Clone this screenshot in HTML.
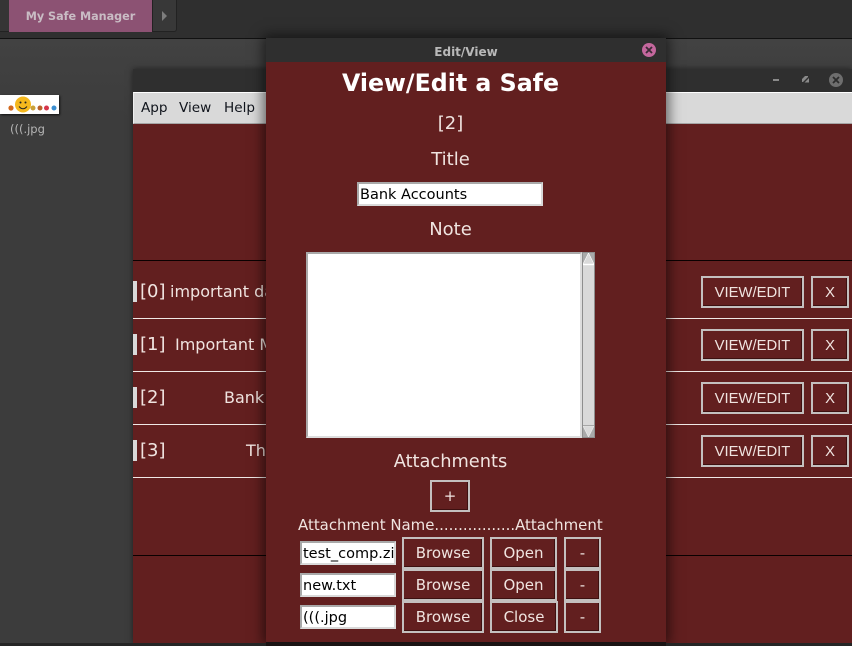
<!DOCTYPE html>
<html><head><meta charset="utf-8">
<style>
html,body{margin:0;padding:0;}
body{width:852px;height:646px;overflow:hidden;position:relative;background:#3c3c3c;font-family:"DejaVu Sans",sans-serif;}
div{position:absolute;box-sizing:border-box;white-space:nowrap;}
.t{color:#f0e4e0;line-height:20px;}
.b2{border:2px solid #c4c0bf;background:#621f1f;color:#f0e4e0;text-align:center;box-shadow:inset -1px -1px 0 #3d1010;}
.inp{background:#fff;border:2px solid #a9a9a9;border-right-color:#d9d9d9;border-bottom-color:#d9d9d9;color:#000;font-size:14.5px;overflow:hidden;padding-left:1px;padding-top:1px;}
.ln{left:133px;width:719px;height:1px;background:#f0e8e6;}
.va{font-family:"Liberation Sans",sans-serif;font-size:14.8px;line-height:30px;}
.ab{font-size:15px;line-height:29px;}
.idx{font-size:18px;left:140px;}
.row{font-size:16px;}
</style></head><body>
<!-- top bar -->
<div style="left:0;top:0;width:852px;height:38px;background:#2f2f2f;"></div>
<div style="left:0;top:38px;width:852px;height:1px;background:#111;"></div>
<div style="left:0;top:0;width:9px;height:32px;background:#353535;border-bottom:1px solid #222;"></div>
<div style="left:9px;top:0;width:143px;height:32px;background:#8c5273;color:#c9bcc4;font-size:11.2px;font-weight:bold;line-height:33px;text-align:center;">My Safe Manager</div>
<div style="left:152px;top:0;width:25px;height:32px;background:#383838;border-left:1px solid #222;border-right:1px solid #222;border-bottom:1px solid #222;border-radius:0 0 3px 0;"></div>
<svg style="position:absolute;left:162px;top:11px" width="6" height="10"><path d="M0 0L5 5L0 10Z" fill="#7d7d7d"/></svg>
<!-- desktop -->
<div style="left:0;top:39px;width:852px;height:607px;background:linear-gradient(#424242,#3c3c3c 80px);"></div>
<div style="left:0;top:95px;width:59px;height:19px;background:#fff;box-shadow:1px 1px 2px #111;"></div>
<svg style="position:absolute;left:7px;top:95px" width="52" height="20">
<circle cx="4" cy="13" r="2.6" fill="#d2691e"/>
<circle cx="16" cy="9.5" r="8" fill="#f5b81d"/><circle cx="13.5" cy="7.5" r="1" fill="#222"/><circle cx="18.5" cy="7.5" r="1" fill="#222"/><path d="M12 11.5Q16 16 20 11.5" stroke="#222" fill="none"/>
<circle cx="26" cy="13" r="2.5" fill="#c9a13a"/><circle cx="33" cy="13" r="2.5" fill="#b9622a"/><circle cx="39.5" cy="13" r="2.5" fill="#d6364a"/><circle cx="47" cy="13" r="2.5" fill="#3b8ed0"/>
</svg>
<div style="left:10px;top:121px;color:#b5b5b5;font-size:11.5px;line-height:17px;">(((.jpg</div>
<!-- main window -->
<div style="left:133px;top:69px;width:719px;height:574px;background:#621f1f;box-shadow:0 0 6px rgba(0,0,0,.5);"></div>
<div style="left:133px;top:69px;width:719px;height:23px;background:#2f2f2f;"></div>
<div style="left:773px;top:79px;width:6px;height:2px;background:#8a8a8a;"></div>
<svg style="position:absolute;left:802px;top:76px" width="7" height="7"><path d="M0 3L3 0H6V1L1 6H0Z M7 2V6.5H2.5Z" fill="#8a8a8a"/></svg>
<div style="left:829px;top:73px;width:14px;height:14px;border-radius:50%;background:#6e6e6e;"></div>
<svg style="position:absolute;left:832px;top:76px" width="8" height="8"><path d="M1 1L7 7M7 1L1 7" stroke="#2c2c2c" stroke-width="1.8"/></svg>
<div style="left:133px;top:92px;width:719px;height:32px;background:#d9d9d9;border-top:1px solid #fff;border-left:1px solid #eee;border-bottom:1px solid #a5a5a5;"></div>
<div style="left:141px;top:99px;color:#10141c;font-size:13.6px;line-height:18px;">App</div>
<div style="left:179px;top:99px;color:#10141c;font-size:13.6px;line-height:18px;">View</div>
<div style="left:224px;top:99px;color:#10141c;font-size:13.6px;line-height:18px;">Help</div>
<div style="left:133px;top:260px;width:719px;height:1px;background:#0a0000;"></div>
<div class="ln" style="top:318px;"></div>
<div class="ln" style="top:371px;"></div>
<div class="ln" style="top:424px;"></div>
<div class="ln" style="top:477px;"></div>
<div style="left:133px;top:555px;width:719px;height:1px;background:#0a0000;"></div>
<div style="left:133px;top:281px;width:4px;height:21px;background:#d9d9d9;"></div>
<div style="left:133px;top:334px;width:4px;height:21px;background:#d9d9d9;"></div>
<div style="left:133px;top:387px;width:4px;height:21px;background:#d9d9d9;"></div>
<div style="left:133px;top:440px;width:4px;height:21px;background:#d9d9d9;"></div>
<div class="t idx" style="top:282px;">[0]</div>
<div class="t row" style="left:170px;top:282px;">important data</div>
<div class="t idx" style="top:335px;">[1]</div>
<div class="t row" style="left:175px;top:335px;">Important Mails</div>
<div class="t idx" style="top:388px;">[2]</div>
<div class="t row" style="left:224px;top:388px;">Bank</div>
<div class="t idx" style="top:441px;">[3]</div>
<div class="t row" style="left:246px;top:441px;">The</div>
<div class="b2 va" style="left:701px;top:276px;width:103px;height:32px;">VIEW/EDIT</div>
<div class="b2 va" style="left:811px;top:276px;width:38px;height:32px;">X</div>
<div class="b2 va" style="left:701px;top:329px;width:103px;height:32px;">VIEW/EDIT</div>
<div class="b2 va" style="left:811px;top:329px;width:38px;height:32px;">X</div>
<div class="b2 va" style="left:701px;top:382px;width:103px;height:32px;">VIEW/EDIT</div>
<div class="b2 va" style="left:811px;top:382px;width:38px;height:32px;">X</div>
<div class="b2 va" style="left:701px;top:435px;width:103px;height:32px;">VIEW/EDIT</div>
<div class="b2 va" style="left:811px;top:435px;width:38px;height:32px;">X</div>
<!-- dialog -->
<div style="left:266px;top:38px;width:400px;height:604px;background:#621f1f;box-shadow:0 0 12px 3px rgba(0,0,0,.55);"></div>
<div style="left:266px;top:38px;width:400px;height:24px;background:#2f2f2f;color:#b9b9b9;font-size:12px;font-weight:bold;line-height:28px;text-align:center;">Edit/View</div>
<div style="left:642px;top:43px;width:14px;height:14px;border-radius:50%;background:#c4679d;"></div>
<svg style="position:absolute;left:645px;top:46px" width="8" height="8"><path d="M1 1L7 7M7 1L1 7" stroke="#3a2a35" stroke-width="1.8"/></svg>
<div style="left:266px;top:68px;width:369px;text-align:center;color:#fff;font-size:23.7px;font-weight:bold;line-height:30px;">View/Edit a Safe</div>
<div class="t" style="left:266px;top:114px;width:369px;text-align:center;font-size:18px;">[2]</div>
<div class="t" style="left:266px;top:150px;width:369px;text-align:center;font-size:18px;">Title</div>
<div class="inp" style="left:357px;top:182px;width:186px;height:24px;line-height:20px;">Bank Accounts</div>
<div class="t" style="left:266px;top:220px;width:369px;text-align:center;font-size:18px;">Note</div>
<div style="left:306px;top:252px;width:276px;height:186px;background:#fff;border:2px solid #a9a9a9;border-right-color:#ddd;border-bottom-color:#ddd;"></div>
<div style="left:582px;top:252px;width:13px;height:186px;background:#d9d9d9;border:1px solid #8e8e8e;"></div>
<svg style="position:absolute;left:583px;top:253px" width="11" height="184">
<rect width="11" height="11" fill="#a9a9a9"/><path d="M5.5 0L11 11H0Z" fill="#d9d9d9" stroke="#fff" stroke-width=".6"/>
<rect y="11" width="11" height="1.2" fill="#fff"/>
<rect y="172" width="11" height="1.2" fill="#8e8e8e"/>
<rect y="173" width="11" height="11" fill="#a9a9a9"/><path d="M0 173H11L5.5 184Z" fill="#d9d9d9" stroke="#eee" stroke-width=".6"/>
</svg>
<div class="t" style="left:266px;top:452px;width:369px;text-align:center;font-size:17.8px;">Attachments</div>
<div class="b2" style="left:430px;top:480px;width:40px;height:32px;font-size:15px;line-height:28px;">+</div>
<div class="t" style="left:298px;top:516px;font-size:14.95px;line-height:18px;">Attachment Name.................Attachment</div>
<div class="inp" style="left:300px;top:541px;width:96px;height:24px;line-height:20px;">test_comp.zip</div>
<div class="inp" style="left:300px;top:573px;width:96px;height:24px;line-height:20px;">new.txt</div>
<div class="inp" style="left:300px;top:605px;width:96px;height:24px;line-height:20px;">(((.jpg</div>
<div class="b2 ab" style="left:402px;top:537px;width:82px;height:32px;">Browse</div>
<div class="b2 ab" style="left:490px;top:537px;width:67px;height:32px;">Open</div>
<div class="b2 ab" style="left:564px;top:537px;width:37px;height:32px;">-</div>
<div class="b2 ab" style="left:402px;top:569px;width:82px;height:32px;">Browse</div>
<div class="b2 ab" style="left:490px;top:569px;width:67px;height:32px;">Open</div>
<div class="b2 ab" style="left:564px;top:569px;width:37px;height:32px;">-</div>
<div class="b2 ab" style="left:402px;top:601px;width:82px;height:32px;">Browse</div>
<div class="b2 ab" style="left:490px;top:601px;width:68px;height:32px;">Close</div>
<div class="b2 ab" style="left:564px;top:601px;width:37px;height:32px;">-</div>
<div style="left:0;top:643px;width:852px;height:3px;background:#252525;"></div>
<div style="left:266px;top:642px;width:400px;height:4px;background:#1a1414;"></div>
</body></html>
